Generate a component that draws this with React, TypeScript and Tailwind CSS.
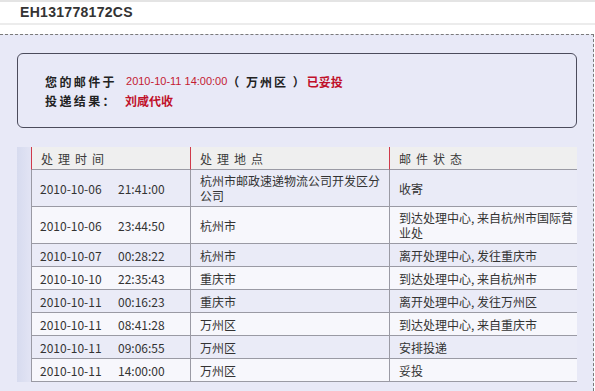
import React from 'react';

type Row = { date: string; time: string; place: string[]; status: string[] };

const rows: Row[] = [
  { date: '2010-10-06', time: '21:41:00', place: ['杭州市邮政速递物流公司开发区分', '公司'], status: ['收寄'] },
  { date: '2010-10-06', time: '23:44:50', place: ['杭州市'], status: ['到达处理中心, 来自杭州市国际营', '业处'] },
  { date: '2010-10-07', time: '00:28:22', place: ['杭州市'], status: ['离开处理中心, 发往重庆市'] },
  { date: '2010-10-10', time: '22:35:43', place: ['重庆市'], status: ['到达处理中心, 来自杭州市'] },
  { date: '2010-10-11', time: '00:16:23', place: ['重庆市'], status: ['离开处理中心, 发往万州区'] },
  { date: '2010-10-11', time: '08:41:28', place: ['万州区'], status: ['到达处理中心, 来自重庆市'] },
  { date: '2010-10-11', time: '09:06:55', place: ['万州区'], status: ['安排投递'] },
  { date: '2010-10-11', time: '14:00:00', place: ['万州区'], status: ['妥投'] },
];

const cjk = "font-['Noto_Sans_CJK_SC',sans-serif]";

function Lines({ lines }: { lines: string[] }) {
  return (
    <>
      {lines.map((l, i) => (
        <div key={i} className="whitespace-nowrap">
          {l}
        </div>
      ))}
    </>
  );
}

export default function App() {
  return (
    <div className={`w-[595px] h-[391px] overflow-hidden bg-white ${cjk}`}>
      {/* Tracking number bar */}
      <div className="h-[34px] bg-white">
        <div className="h-[2px] bg-[#e4e4e4]" />
        <div className="flex h-[21px] items-center pl-[20px] font-['Liberation_Sans',Arial,sans-serif] text-[14px] font-bold tracking-[0.3px] text-[#333]">
          EH131778172CS
        </div>
        <div className="h-[2px] bg-[#ececec]" />
      </div>

      {/* Main panel */}
      <div className="h-[357px] w-[594px] border-t border-r border-dashed border-[#7a7a7a] bg-[#e8e9f7] pl-[17px] pt-[18px]">
        {/* Summary box */}
        <div className="h-[75px] w-[560px] rounded-[6px] border border-[#4b4b5c] pl-[27px] pt-[18px] text-[12px] leading-[19px] text-[#222]">
          <div className="flex items-center whitespace-nowrap">
            <span className="font-bold tracking-[2.4px]">您的邮件于</span>
            <span className="ml-[9px] font-['Liberation_Sans',Arial,sans-serif] text-[11px] text-[#c41a32]">
              2010-10-11 14:00:00
            </span>
            <span className="font-bold tracking-[2px]">（ 万州区 ）</span>
            <span className="font-bold text-[#c0102a]">已妥投</span>
          </div>
          <div className="flex items-center whitespace-nowrap">
            <span className="font-bold tracking-[2.4px]">投递结果：</span>
            <span className="ml-[8px] font-bold text-[#c0102a]">刘咸代收</span>
          </div>
        </div>

        {/* Tracking table */}
        <div className="mt-[19px] flex">
          <div className="w-[14px] bg-linear-to-r from-[#d7dbef] to-[#e2e4f4]" />
          <table className="w-[546px] table-fixed border-separate border-spacing-0 text-[12px] leading-[15px] text-[#333]">
            <colgroup>
              <col className="w-[159px]" />
              <col className="w-[199px]" />
              <col className="w-[188px]" />
            </colgroup>
            <thead>
              <tr className="h-[23px] bg-[#efefef]">
                {['处理时间', '处理地点', '邮件状态'].map((h) => (
                  <th
                    key={h}
                    className="border-b border-l border-b-[#9a9aa4] border-l-[#d03a4a] pl-[9px] text-left font-normal tracking-[5px] text-[#3a3a3a]"
                  >
                    {h}
                  </th>
                ))}
              </tr>
            </thead>
            <tbody>
              {rows.map((r, i) => {
                const pad = r.place.length > 1 || r.status.length > 1 ? 'pt-[3px] pb-[3px]' : 'pt-[4px] pb-[3px]';
                return (
                  <tr key={i} className={i % 2 === 0 ? 'bg-[#eaebf7]' : 'bg-[#f7f7fc]'}>
                    <td className={`border-b border-l border-[#9a9aa4] pl-[8px] align-middle ${pad}`}>
                      <span className="inline-block w-[78px]">{r.date}</span>
                      <span>{r.time}</span>
                    </td>
                    <td className={`border-b border-l border-[#9a9aa4] pl-[9px] align-middle ${pad}`}>
                      <Lines lines={r.place} />
                    </td>
                    <td className={`border-b border-l border-[#9a9aa4] pl-[9px] align-middle ${pad}`}>
                      <Lines lines={r.status} />
                    </td>
                  </tr>
                );
              })}
            </tbody>
          </table>
        </div>
      </div>
    </div>
  );
}
